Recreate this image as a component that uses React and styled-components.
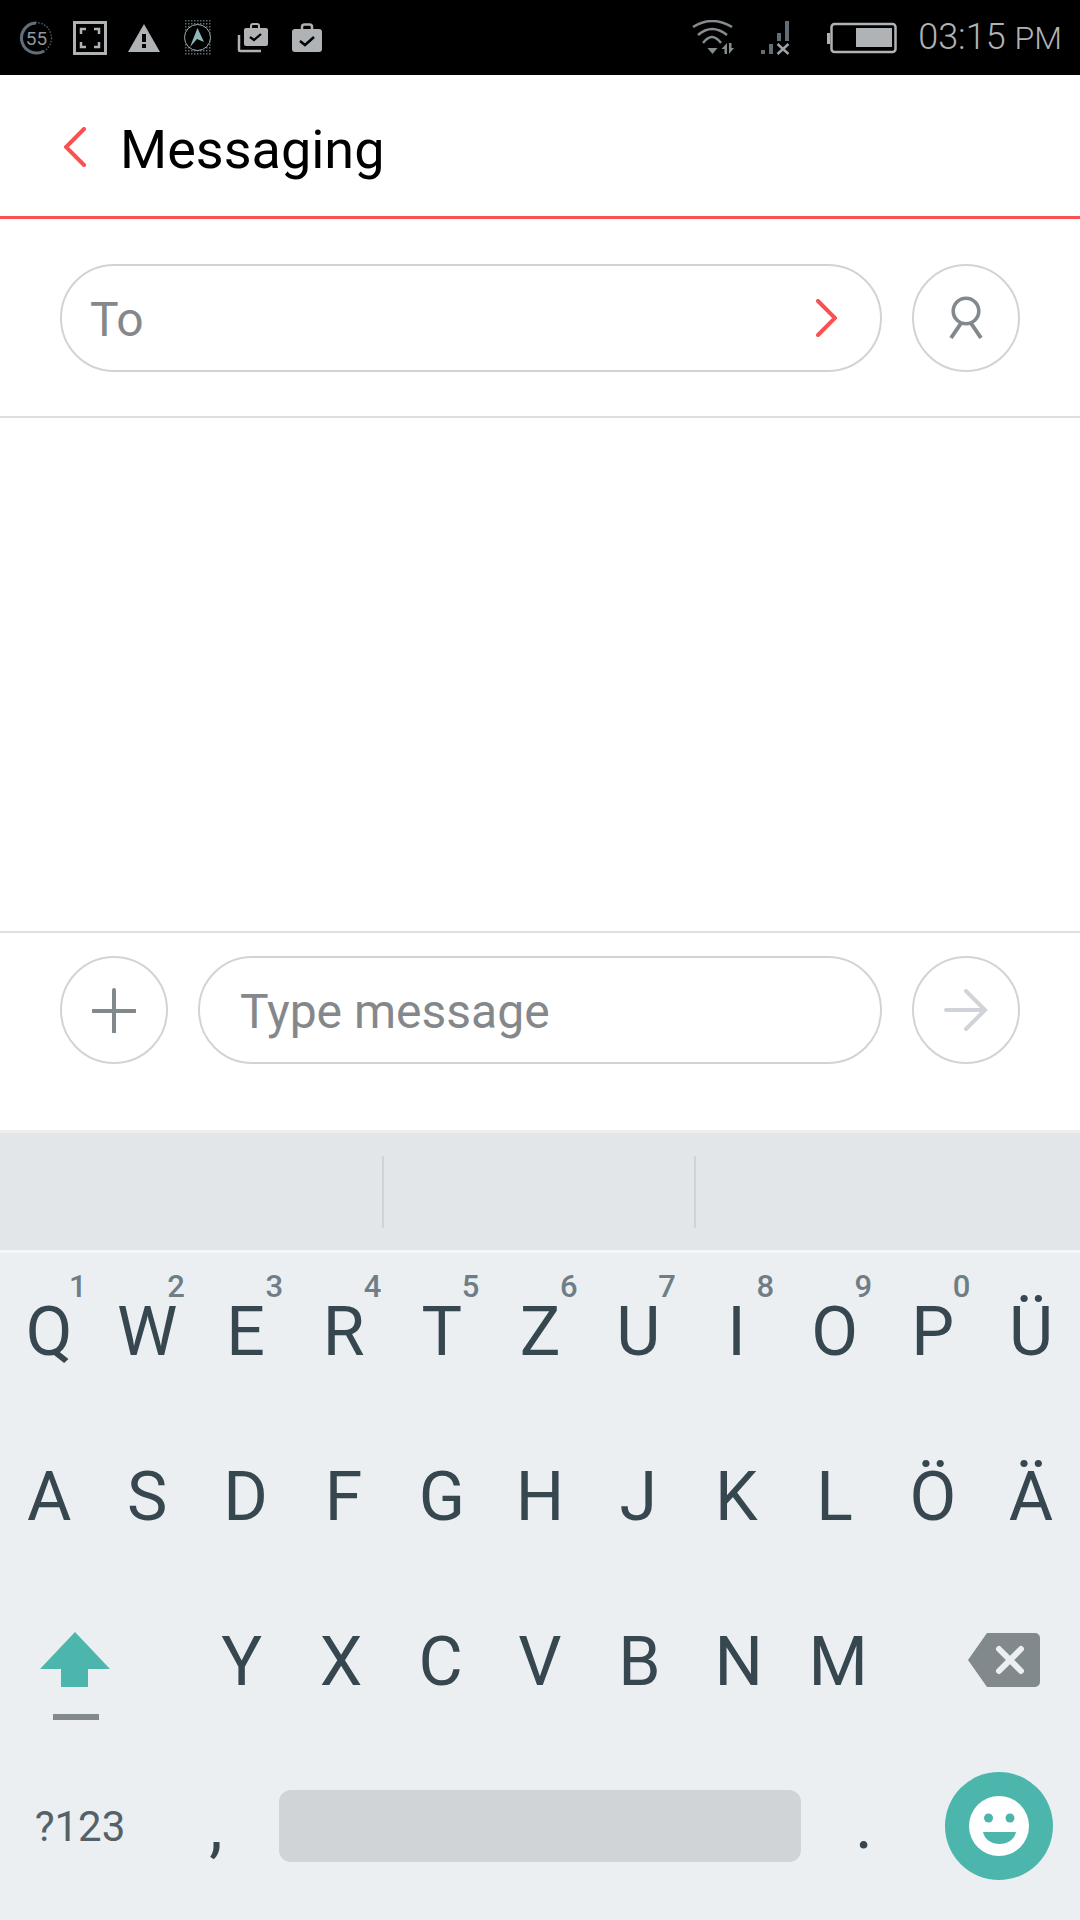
import React from "react";
import styled, { createGlobalStyle } from "styled-components";

const Global = createGlobalStyle`
  html, body { margin: 0; padding: 0; background: #fff; }
  body { font-family: Roboto, "Liberation Sans", sans-serif; }
`;
const Page = styled.div`
  width: 1080px; height: 1920px; display: flex; flex-direction: column; overflow: hidden; background: #fff;
`;
const StatusBar = styled.div`
  height: 75px; background: #000; display: flex; align-items: center; justify-content: space-between; flex: none;
`;
const StatusGroup = styled.div`
  display: flex; align-items: center; height: 100%;
`;
const StatusSvg = styled.svg`
  display: block; flex: none; margin-left: ${p => p.$ml || 0}px;
`;
const Clock = styled.div`
  color: #b0b3b5; font-size: 36px; font-weight: 300; margin-left: 21px; margin-right: 18px; line-height: 75px; white-space: nowrap;
  small { font-size: 32px; margin-left: 9px; }
`;
const Header = styled.div`
  height: 141px; flex: none; box-sizing: border-box; display: flex; align-items: center; padding: 3px 0 0 64px;
`;
const Title = styled.div`
  font-size: 54px; color: #000; margin-left: 34px; line-height: 1; padding-top: 6px;
`;
const RedRule = styled.div`
  height: 3px; background: #fb5050; flex: none;
`;
const ToRow = styled.div`
  height: 199px; flex: none; box-sizing: border-box; border-bottom: 2px solid #dcdfe1;
  display: flex; align-items: center; padding: 0 60px; gap: 30px;
`;
const Pill = styled.div`
  flex: 1; height: 108px; box-sizing: border-box; border: 2px solid #d0d4d8; border-radius: 54px;
  display: flex; align-items: center; justify-content: space-between; padding: ${p => p.$pad};
`;
const Placeholder = styled.span`
  font-size: 48px; color: #85888b; padding-top: ${p => p.$pt || 0}px;
`;
const Round = styled.div`
  width: 108px; height: 108px; box-sizing: border-box; flex: none; border: 2px solid #d0d4d8; border-radius: 50%;
  display: flex; align-items: center; justify-content: center;
`;
const Body = styled.div`
  flex: 1; border-bottom: 2px solid #dcdfe1;
`;
const ComposeRow = styled.div`
  height: 197px; flex: none; box-sizing: border-box; display: flex; align-items: flex-start; padding: 23px 60px 0; gap: 30px;
`;
const Candidates = styled.div`
  height: 120px; flex: none; background: #e2e6e9; border-top: 3px solid #ededed; box-sizing: border-box;
  display: grid; grid-template-columns: 384px 312px 1fr; align-items: center;
`;
const Cell = styled.div`
  height: 72px; border-right: ${p => (p.$line ? "2px solid #d0d4d8" : "none")};
`;
const Keyboard = styled.div`
  height: 670px; flex: none; box-sizing: border-box; background: #ebeff2; border-top: 3px solid #f4f6f7; display: flex; flex-direction: column;
`;
const KeyRow = styled.div`
  height: ${p => p.$h}px; flex: none; box-sizing: border-box; display: flex; align-items: center; padding-bottom: ${p => p.$pb || 0}px;
`;
const Key = styled.div`
  flex: 1 1 0; position: relative; text-align: center; font-size: 68px; color: #37474f; line-height: 70px;
`;
const Hint = styled.span`
  position: absolute; font-size: 31px; font-weight: 500; line-height: 32px; color: #6f7e86; left: 50%; margin-left: 20px; top: -26px;
`;
const SideKey = styled.div`
  width: ${p => p.$w}px; flex: none; box-sizing: border-box; display: flex; justify-content: center; align-items: center;
  padding: ${p => p.$pad || "0"};
`;
const SymKey = styled.div`
  width: 160px; flex: none; text-align: center; font-size: 42px; color: #546168;
`;
const Punct = styled.div`
  width: ${p => p.$w}px; flex: none; box-sizing: border-box; text-align: center; font-size: 68px; color: #37474f; line-height: 70px;
  padding: ${p => p.$pad || "0"};
`;
const Space = styled.div`
  width: 522px; height: 72px; background: #d0d4d7; border-radius: 12px; flex: none;
`;
const Emoji = styled.div`
  width: 108px; height: 108px; border-radius: 50%; background: #4db6ac; flex: none; margin-left: 20px;
  display: flex; align-items: center; justify-content: center;
`;

const rows = [
  { h: 162, pb: 4, keys: [["Q","1"],["W","2"],["E","3"],["R","4"],["T","5"],["Z","6"],["U","7"],["I","8"],["O","9"],["P","0"],["Ü"]] },
  { h: 164, pb: 0, keys: [["A"],["S"],["D"],["F"],["G"],["H"],["J"],["K"],["L"],["Ö"],["Ä"]] },
];

const G = "#b0b3b5";

const Icon55 = () => (
  <StatusSvg width="34" height="34" viewBox="0 0 34 34" $ml={19}>
    <circle cx="17" cy="17" r="15.500" fill="none" stroke="#4a555b" strokeWidth="1.500" strokeDasharray="1.500 1.500" />
    <path d="M25 30 A15 15 0 1 1 17 2" fill="none" stroke="#5f6e77" strokeWidth="3" />
    <text x="17.500" y="24" textAnchor="middle" fontSize="19" fill="#8d979d" fontFamily="Roboto">55</text>
  </StatusSvg>
);
const IconScreen = () => (
  <StatusSvg width="34" height="34" viewBox="0 0 34 34" $ml={20}>
    <rect x="1.500" y="1.500" width="31" height="31" fill="none" stroke={G} strokeWidth="3" />
    <path d="M8 13V8h5M21 8h5v5M26 21v5h-5M13 26H8v-5" fill="none" stroke={G} strokeWidth="2.500" />
  </StatusSvg>
);
const IconWarn = () => (
  <StatusSvg width="32" height="30" viewBox="0 0 32 30" $ml={21}>
    <path d="M16 1 L32 29 H0 Z" fill={G} />
    <rect x="14" y="11" width="4" height="8" fill="#000" />
    <rect x="14" y="21" width="4" height="4" fill="#000" />
  </StatusSvg>
);
const IconNav = () => (
  <StatusSvg width="32" height="36" viewBox="0 0 32 36" $ml={22}>
    <defs>
      <pattern id="navDots" width="3" height="3" patternUnits="userSpaceOnUse">
        <rect width="1.500" height="1.500" fill="#5b6a6e" />
      </pattern>
    </defs>
    <rect x="2" y="0" width="28" height="36" fill="url(#navDots)" />
    <circle cx="15.500" cy="17.500" r="13" fill="#000" stroke="#9fb0b3" strokeWidth="1" />
    <path d="M15.500 8 L22 22 L15 19 L8 27 Z" fill="#8fb5b5" />
  </StatusSvg>
);
const IconCaseStack = () => (
  <StatusSvg width="32" height="30" viewBox="0 0 32 30" $ml={23}>
    <path d="M2 12 V27 a1 1 0 0 0 1 1 H24" fill="none" stroke={G} strokeWidth="2.500" />
    <path d="M14 5 V3 a2 2 0 0 1 2 -2 h4 a2 2 0 0 1 2 2 v2" fill="none" stroke={G} strokeWidth="2" />
    <rect x="7" y="5" width="24" height="18" rx="2" fill={G} />
    <path d="M13 14 l4 3 l7 -6" fill="none" stroke="#000" strokeWidth="2.200" />
  </StatusSvg>
);
const IconCase = () => (
  <StatusSvg width="30" height="30" viewBox="0 0 30 30" $ml={23}>
    <path d="M10 7 V4 a2.500 2.500 0 0 1 2.500 -2.500 h5 a2.500 2.500 0 0 1 2.500 2.500 v3" fill="none" stroke={G} strokeWidth="2.500" />
    <rect x="0" y="6" width="30" height="23" rx="3" fill={G} />
    <path d="M8 18 l5 4 l9 -8" fill="none" stroke="#000" strokeWidth="2.500" />
  </StatusSvg>
);
const IconWifi = () => (
  <StatusSvg width="44" height="36" viewBox="0 0 44 36">
    <g fill="none" stroke="#858d90" strokeWidth="2.500">
      <path d="M1 7 Q20 -5 40 7" />
      <path d="M6 15 Q20 3 35 15" />
      <path d="M11 23 Q20 11 29 23" />
    </g>
    <path d="M15.500 28 h10 l-5 6 Z" fill="#858d90" />
    <path d="M35 23 V34 H32.500 V29 H29.500 Z M37 23 V34 L42 28 H39.500 V23 Z" fill="#858d90" />
  </StatusSvg>
);
const IconSignal = () => (
  <StatusSvg width="30" height="36" viewBox="0 0 30 36" $ml={25}>
    <rect x="0" y="30" width="4" height="4" fill="#5f6e77" />
    <rect x="8" y="24" width="4" height="10" fill="#5f6e77" />
    <rect x="16" y="13" width="4" height="8" fill="#5f6e77" />
    <rect x="24" y="1" width="4" height="20" fill="#5f6e77" />
    <path d="M16.500 24 L27.500 34 M27.500 24 L16.500 34" stroke="#9aa3a7" strokeWidth="2.500" />
  </StatusSvg>
);
const IconBattery = () => (
  <StatusSvg width="70" height="32" viewBox="0 0 70 32" $ml={36}>
    <rect x="0" y="11" width="3" height="11" fill={G} />
    <rect x="4.500" y="2" width="64" height="28" rx="3" fill="none" stroke={G} strokeWidth="2.500" />
    <rect x="29" y="6" width="36" height="19" fill={G} />
  </StatusSvg>
);

const Chevron = ({ dir = "left", w = 22, h = 40, sw = 4 }) => (
  <svg width={w} height={h} viewBox={`0 0 ${w} ${h}`} style={{ display: "block", flex: "none" }}>
    <path
      d={dir === "left" ? `M${w - 2} 2 L2 ${h / 2} L${w - 2} ${h - 2}` : `M2 2 L${w - 2} ${h / 2} L2 ${h - 2}`}
      fill="none" stroke="#fb5050" strokeWidth={sw} strokeLinecap="round" strokeLinejoin="miter"
    />
  </svg>
);

const Person = () => (
  <svg width="36" height="44" viewBox="0 0 36 44">
    <circle cx="18" cy="15" r="12.800" fill="none" stroke="#82898c" strokeWidth="3.600" />
    <path d="M13.500 26.500 L3 42 M22.500 26.500 L33 42" fill="none" stroke="#82898c" strokeWidth="4" />
  </svg>
);
const Plus = () => (
  <svg width="44" height="46" viewBox="0 0 44 46">
    <path d="M22 3 V45 M1 24 H43" fill="none" stroke="#82898c" strokeWidth="4" strokeLinecap="round" />
  </svg>
);
const Arrow = () => (
  <svg width="44" height="42" viewBox="0 0 44 42">
    <path d="M2 21 H41 M22 2 L41 21 L22 40" fill="none" stroke="#d0d4d8" strokeWidth="4" strokeLinecap="round" />
  </svg>
);
const Shift = () => (
  <svg width="72" height="92" viewBox="0 0 72 92">
    <path d="M36 1 L71 38 H49 V56 H22 V38 H1 Z" fill="#4db6ac" />
    <rect x="14" y="83" width="46" height="6" fill="#82898c" />
  </svg>
);
const Backspace = () => (
  <svg width="72" height="54" viewBox="0 0 72 54">
    <path d="M19 0 H67 a5 5 0 0 1 5 5 V49 a5 5 0 0 1 -5 5 H19 L0 27 Z" fill="#82898c" />
    <path d="M31 16 L53 38 M53 16 L31 38" stroke="#ebeff2" strokeWidth="6" strokeLinecap="round" />
  </svg>
);
const Smiley = () => (
  <svg width="60" height="60" viewBox="0 0 60 60">
    <circle cx="30" cy="30" r="30" fill="#fff" />
    <circle cx="19.500" cy="22" r="4.500" fill="#4db6ac" />
    <circle cx="41" cy="22" r="4.500" fill="#4db6ac" />
    <path d="M14 36 H47 C44 52 17 52 14 36 Z" fill="#4db6ac" />
  </svg>
);

export default function App() {
  return (
    <Page>
      <Global />
      <StatusBar>
        <StatusGroup>
          <Icon55 />
          <IconScreen />
          <IconWarn />
          <IconNav />
          <IconCaseStack />
          <IconCase />
        </StatusGroup>
        <StatusGroup>
          <IconWifi />
          <IconSignal />
          <IconBattery />
          <Clock>03:15<small>PM</small></Clock>
        </StatusGroup>
      </StatusBar>
      <Header>
        <Chevron dir="left" />
        <Title>Messaging</Title>
      </Header>
      <RedRule />
      <ToRow>
        <Pill $pad="0 43px 0 28px">
          <Placeholder $pt={3}>To</Placeholder>
          <Chevron dir="right" w={21} h={38} />
        </Pill>
        <Round><Person /></Round>
      </ToRow>
      <Body />
      <ComposeRow>
        <Round><Plus /></Round>
        <Pill $pad="0 40px">
          <Placeholder $pt={2}>Type message</Placeholder>
        </Pill>
        <Round><Arrow /></Round>
      </ComposeRow>
      <Candidates>
        <Cell $line />
        <Cell $line />
        <Cell />
      </Candidates>
      <Keyboard>
        {rows.map((r, i) => (
          <KeyRow key={i} $h={r.h} $pb={r.pb}>
            {r.keys.map(([c, h]) => (
              <Key key={c}>
                {c}
                {h && <Hint>{h}</Hint>}
              </Key>
            ))}
          </KeyRow>
        ))}
        <KeyRow $h={166}>
          <SideKey $w={150} $pad="30px 0 0"><Shift /></SideKey>
          <SideKey $w={42} />
          {["Y","X","C","V","B","N","M"].map(c => <Key key={c}>{c}</Key>)}
          <SideKey $w={192} $pad="0 0 4px 40px"><Backspace /></SideKey>
        </KeyRow>
        <KeyRow $h={175} $pb={13}>
          <SymKey>?123</SymKey>
          <Punct $w={119} $pad="0 7px 0 0">,</Punct>
          <Space />
          <Punct $w={124} $pad="0 0 2px 2px">.</Punct>
          <Emoji><Smiley /></Emoji>
        </KeyRow>
      </Keyboard>
    </Page>
  );
}
